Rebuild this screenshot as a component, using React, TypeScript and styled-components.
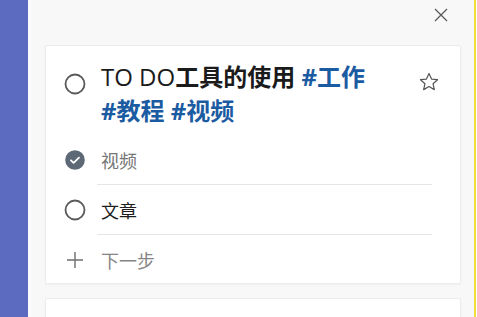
import React from 'react'
import styled, { createGlobalStyle } from 'styled-components'

const GlobalStyle = createGlobalStyle`
  html, body {
    margin: 0;
    padding: 0;
    background: #ffffff;
  }
  body {
    font-family: "Open Sans", "Noto Sans CJK SC", sans-serif;
  }
`

const Screen = styled.div`
  display: flex;
  width: 477px;
  height: 317px;
  overflow: hidden;
  background: #ffffff;
`

const Sidebar = styled.div`
  flex: 0 0 28px;
  background: #5c6bc0;
`

const Panel = styled.main`
  flex: 1;
  display: flex;
  flex-direction: column;
  background: #f8f8f8;
  border-left: 3px solid #fcfcfc;
  border-right: 2px solid #f0df3a;
  margin-right: 1px;
  padding: 0 13px 0 14px;
`

const Header = styled.div`
  flex: 0 0 45px;
  display: flex;
  justify-content: flex-end;
  align-items: flex-start;
  padding: 7px 13px 0 0;
  box-sizing: border-box;
`

const IconButton = styled.button`
  border: none;
  background: none;
  padding: 0;
  width: 15px;
  height: 15px;
  display: flex;
  align-items: center;
  justify-content: center;
  color: #5a5a5a;
  cursor: pointer;
`

const Card = styled.section<{ $tall?: boolean }>`
  background: #ffffff;
  border: 1px solid #ececec;
  border-radius: 2px;
  box-shadow: 0 1px 2px rgba(0, 0, 0, 0.04);
  box-sizing: border-box;
  flex-shrink: 0;
  margin-bottom: 14px;
  height: ${(p) => (p.$tall ? '239px' : '60px')};
`

const TitleRow = styled.div`
  display: flex;
  align-items: flex-start;
  padding: 14px 20px 0 18px;
`

const Circle = styled.span`
  flex: 0 0 22px;
  width: 22px;
  height: 22px;
  display: flex;
  align-items: center;
  justify-content: center;
`

const TitleCircle = styled(Circle)`
  margin-top: 13px;
  margin-right: 15px;
`

const Title = styled.h2`
  flex: 1;
  margin: 0;
  font-size: 24px;
  line-height: 34px;
  font-weight: 700;
  color: #1b1b1b;
  font-family: "Open Sans", "Noto Sans CJK SC", sans-serif;
`

const Latin = styled.span`
  font-weight: 400;
`

const Tag = styled.span`
  color: #1b5ba2;
  white-space: nowrap;
`

const Star = styled.span`
  flex: 0 0 22px;
  margin: 11px 0 0 10px;
  display: flex;
  justify-content: center;
  color: #555;
`

const Steps = styled.ul`
  list-style: none;
  margin: 7px 0 0;
  padding: 0 28px 0 18px;
`

const Step = styled.li`
  display: flex;
  align-items: center;
  height: 50px;
`

const StepIcon = styled(Circle)`
  margin-right: 11px;
`

const StepLabel = styled.span<{ $done?: boolean; $muted?: boolean; $last?: boolean }>`
  flex: 1;
  height: 50px;
  display: flex;
  align-items: center;
  padding-left: 4px;
  box-sizing: border-box;
  border-bottom: ${(p) => (p.$last ? 'none' : '1px solid #e5e5e5')};
  font-size: 18px;
  color: ${(p) => (p.$done ? '#767676' : p.$muted ? '#858585' : '#1e1e1e')};
  font-family: "Noto Sans CJK SC", sans-serif;
`

const RingIcon = () => (
  <svg width="22" height="22" viewBox="0 0 22 22">
    <circle cx="11" cy="11" r="9.5" fill="none" stroke="#5a5a5a" strokeWidth="1.8" />
  </svg>
)

const DoneIcon = () => (
  <svg width="22" height="22" viewBox="0 0 22 22">
    <circle cx="11" cy="11" r="9.8" fill="#5e6977" />
    <path d="M7 11.3l2.6 2.5L15 8.6" fill="none" stroke="#fff" strokeWidth="1.8" strokeLinecap="round" strokeLinejoin="round" />
  </svg>
)

const PlusIcon = () => (
  <svg width="18" height="18" viewBox="0 0 18 18">
    <path d="M9 1v16M1 9h16" stroke="#6e6e6e" strokeWidth="1.4" />
  </svg>
)

const StarIcon = () => (
  <svg width="22" height="22" viewBox="0 0 24 24">
    <path
      d="M12 2.8l2.8 6 6.5.7-4.9 4.4 1.4 6.4L12 17l-5.8 3.3 1.4-6.4-4.9-4.4 6.5-.7z"
      fill="none"
      stroke="#555"
      strokeWidth="1.3"
      strokeLinejoin="round"
    />
  </svg>
)

const CloseIcon = () => (
  <svg width="14" height="14" viewBox="0 0 14 14">
    <path d="M1 1l12 12M13 1L1 13" stroke="#5a5a5a" strokeWidth="1.3" />
  </svg>
)

export default function App() {
  return (
    <>
      <GlobalStyle />
      <Screen>
        <Sidebar />
        <Panel>
          <Header>
            <IconButton aria-label="close">
              <CloseIcon />
            </IconButton>
          </Header>

          <Card $tall>
            <TitleRow>
              <TitleCircle>
                <RingIcon />
              </TitleCircle>
              <Title>
                <Latin>TO DO</Latin>工具的使用 <Tag>#工作</Tag> <Tag>#教程</Tag> <Tag>#视频</Tag>
              </Title>
              <Star>
                <StarIcon />
              </Star>
            </TitleRow>

            <Steps>
              <Step>
                <StepIcon>
                  <DoneIcon />
                </StepIcon>
                <StepLabel $done>视频</StepLabel>
              </Step>
              <Step>
                <StepIcon>
                  <RingIcon />
                </StepIcon>
                <StepLabel>文章</StepLabel>
              </Step>
              <Step>
                <StepIcon>
                  <PlusIcon />
                </StepIcon>
                <StepLabel $muted $last>下一步</StepLabel>
              </Step>
            </Steps>
          </Card>

          <Card />
        </Panel>
      </Screen>
    </>
  )
}
